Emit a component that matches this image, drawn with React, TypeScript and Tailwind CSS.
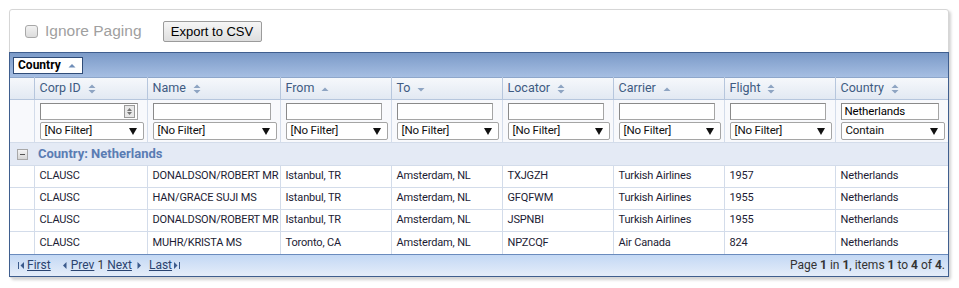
import React from 'react';

type Col = { key: string; label: string; width: number; sort: 'both' | 'up' | 'down' };

const cols: Col[] = [
  { key: 'corp', label: 'Corp ID', width: 113, sort: 'both' },
  { key: 'name', label: 'Name', width: 133, sort: 'both' },
  { key: 'from', label: 'From', width: 111, sort: 'up' },
  { key: 'to', label: 'To', width: 111, sort: 'down' },
  { key: 'loc', label: 'Locator', width: 111, sort: 'both' },
  { key: 'carrier', label: 'Carrier', width: 111, sort: 'up' },
  { key: 'flight', label: 'Flight', width: 111, sort: 'both' },
  { key: 'country', label: 'Country', width: 113, sort: 'both' },
];

const rows = [
  ['CLAUSC', 'DONALDSON/ROBERT MR', 'Istanbul, TR', 'Amsterdam, NL', 'TXJGZH', 'Turkish Airlines', '1957', 'Netherlands'],
  ['CLAUSC', 'HAN/GRACE SUJI MS', 'Istanbul, TR', 'Amsterdam, NL', 'GFQFWM', 'Turkish Airlines', '1955', 'Netherlands'],
  ['CLAUSC', 'DONALDSON/ROBERT MR', 'Istanbul, TR', 'Amsterdam, NL', 'JSPNBI', 'Turkish Airlines', '1955', 'Netherlands'],
  ['CLAUSC', 'MUHR/KRISTA MS', 'Toronto, CA', 'Amsterdam, NL', 'NPZCQF', 'Air Canada', '824', 'Netherlands'],
];

function SortIcon({ dir }: { dir: 'both' | 'up' | 'down' }) {
  return (
    <svg width="8" height="10" viewBox="0 0 8 10" className="ml-[7px] inline-block">
      {dir === 'both' && <path d="M0.5 4 L4 0.5 L7.5 4 Z M0.5 6 L4 9.5 L7.5 6 Z" fill="#8ea4c2" />}
      {dir === 'up' && <path d="M0.5 7 L4 3.5 L7.5 7 Z" fill="#8ea4c2" />}
      {dir === 'down' && <path d="M0.5 4 L4 7.5 L7.5 4 Z" fill="#8ea4c2" />}
    </svg>
  );
}

function FakeSelect({ text, width }: { text: string; width: number }) {
  return (
    <div
      className="flex h-[18px] items-center justify-between rounded-[2px] border border-[#a5a5a5] bg-white pl-[4px] pr-[6px] text-[11.5px] text-[#111]"
      style={{ width }}
    >
      <span>{text}</span>
      <svg width="8" height="7" viewBox="0 0 8 7">
        <path d="M0 0 H8 L4 7 Z" fill="#111" />
      </svg>
    </div>
  );
}

function PagerIcon({ kind }: { kind: 'first' | 'prev' | 'next' | 'last' }) {
  return (
    <svg width="9" height="9" viewBox="0 0 9 9" className="inline-block">
      {kind === 'first' && (
        <>
          <rect x="1" y="1" width="1" height="7" fill="#3b5a8c" />
          <path d="M7 1 L3.5 4.5 L7 8 Z" fill="#3b5a8c" />
        </>
      )}
      {kind === 'prev' && <path d="M6.5 1 L3 4.5 L6.5 8 Z" fill="#3b5a8c" />}
      {kind === 'next' && <path d="M2.5 1 L6 4.5 L2.5 8 Z" fill="#3b5a8c" />}
      {kind === 'last' && (
        <>
          <path d="M2 1 L5.5 4.5 L2 8 Z" fill="#3b5a8c" />
          <rect x="7" y="1" width="1" height="7" fill="#3b5a8c" />
        </>
      )}
    </svg>
  );
}

export default function App() {
  const font = { fontFamily: 'Roboto, "Liberation Sans", sans-serif' };
  return (
    <div className="h-[288px] w-[959px] bg-white pl-[9px] pt-[9px]">
      <div className="w-[940px] rounded-[3px] border border-[#d6d6d6] bg-white shadow-[2px_2px_3px_rgba(0,0,0,0.18)]">
        {/* toolbar */}
        <div className="flex h-[42px] items-center pl-[15px]" style={{ fontFamily: '"Liberation Sans", Arial, sans-serif' }}>
          <div className="h-[13px] w-[13px] rounded-[3px] border border-[#a8a8a8] bg-gradient-to-b from-[#f2f2f2] to-[#dcdcdc]" />
          <span className="ml-[7px] text-[15.5px] text-[#a0a0a0]">Ignore Paging</span>
          <button className="ml-[21px] h-[21px] w-[99px] rounded-[2px] border border-[#9b9b9b] bg-gradient-to-b from-[#f6f6f6] to-[#dedede] text-[13px] text-black">
            Export to CSV
          </button>
        </div>

        {/* grid */}
        <div className="-ml-px w-[940px] border border-[#3f5e8e]" style={font}>
          {/* group panel */}
          <div className="flex h-[24px] items-center bg-gradient-to-b from-[#7b9ac8] to-[#a6bee2] pl-[3px]">
            <div className="flex h-[17px] items-center border border-[#2f4c78] bg-white pl-[4px] pr-[6px] text-[12px] font-bold text-black">
              Country
              <svg width="8" height="5" viewBox="0 0 8 5" className="ml-[7px]">
                <path d="M0.5 4.5 L4 1 L7.5 4.5 Z" fill="#6f8db8" />
              </svg>
            </div>
          </div>

          <table className="w-full table-fixed border-collapse text-[11px] tracking-[-0.15px]">
            <colgroup>
              <col style={{ width: 24 }} />
              {cols.map((c) => (
                <col key={c.key} style={{ width: c.width }} />
              ))}
            </colgroup>
            <thead>
              <tr className="h-[22px] bg-gradient-to-b from-[#f6f8fb] to-[#e1e8f2]">
                <th className="border-b border-r border-t border-[#b6c6dd] border-t-[#8ea7cb]" />
                {cols.map((c, i) => (
                  <th
                    key={c.key}
                    className={`border-b border-t border-[#b6c6dd] border-t-[#8ea7cb] pl-[5px] text-left text-[12.5px] font-normal tracking-normal text-[#3e5b82] ${i < cols.length - 1 ? 'border-r' : ''}`}
                  >
                    <span className="inline-flex items-center">
                      {c.label}
                      <SortIcon dir={c.sort} />
                    </span>
                  </th>
                ))}
              </tr>
              <tr className="h-[43px] bg-[#f8f9fc]">
                <td className="border-r border-[#d3dcea]" />
                {cols.map((c, i) => (
                  <td key={c.key} className={`border-[#d3dcea] pl-[5px] align-top ${i < cols.length - 1 ? 'border-r' : ''}`}>
                    <div className="mt-[3px] flex h-[17px] items-center justify-between border border-[#a5a5a5] border-l-[#8a8a8a] border-t-[#8a8a8a] bg-white pl-[3px] pr-[2px] text-[11.5px] text-black" style={{ width: c.width - 15 }}>
                      <span>{c.key === 'country' ? 'Netherlands' : ''}</span>
                      {c.key === 'corp' && (
                        <span className="flex h-[13px] w-[11px] items-center justify-center border border-[#9a9a9a] bg-[#e8e8e8]">
                          <svg width="7" height="9" viewBox="0 0 7 9">
                            <path d="M1 4 L3.5 1 L6 4 Z M1 5 L3.5 8 L6 5 Z" fill="#777" />
                          </svg>
                        </span>
                      )}
                    </div>
                    <div className="mt-[2px]">
                      <FakeSelect text={c.key === 'country' ? 'Contain' : '[No Filter]'} width={c.width - 9} />
                    </div>
                  </td>
                ))}
              </tr>
            </thead>
            <tbody>
              <tr className="h-[23px] border-t border-[#d3dcea] bg-[#e4eaf5]">
                <td className="pl-[7px]">
                  <div className="flex h-[11px] w-[11px] items-center justify-center border border-[#a8a8a8] bg-gradient-to-b from-[#f4f4f4] to-[#d6d6d6]">
                    <div className="h-px w-[5px] bg-[#555]" />
                  </div>
                </td>
                <td colSpan={8} className="pl-[4px] text-[13px] font-bold tracking-normal text-[#5a7cb3]">
                  Country: Netherlands
                </td>
              </tr>
              {rows.map((r, ri) => (
                <tr key={ri} className="h-[22px] border-t border-[#d3dcea] bg-white text-[#1c1c34]">
                  <td className="border-r border-[#d3dcea]" />
                  {r.map((v, i) => (
                    <td key={i} className={`overflow-hidden whitespace-nowrap border-[#d3dcea] pl-[5px] ${i < r.length - 1 ? 'border-r' : ''}`}>
                      {v}
                    </td>
                  ))}
                </tr>
              ))}
            </tbody>
          </table>

          {/* pager */}
          <div className="flex h-[22px] items-center justify-between border-t border-[#6a8bbd] bg-gradient-to-b from-[#c3d8f4] to-[#e5edf9] pl-[7px] pr-[3px] text-[12px] text-[#333]">
            <div className="flex items-center text-[#2b4470]">
              <PagerIcon kind="first" />
              <span className="ml-[1px] underline">First</span>
              <span className="ml-[9px]"><PagerIcon kind="prev" /></span>
              <span className="ml-[2px] underline">Prev</span>
              <span className="ml-[3px] text-[#333]">1</span>
              <span className="ml-[3px] underline">Next</span>
              <span className="ml-[3px]"><PagerIcon kind="next" /></span>
              <span className="ml-[5px] underline">Last</span>
              <PagerIcon kind="last" />
            </div>
            <div className="text-[#333]">
              Page <b>1</b> in <b>1</b>, items <b>1</b> to <b>4</b> of <b>4</b>.
            </div>
          </div>
        </div>
      </div>
    </div>
  );
}
